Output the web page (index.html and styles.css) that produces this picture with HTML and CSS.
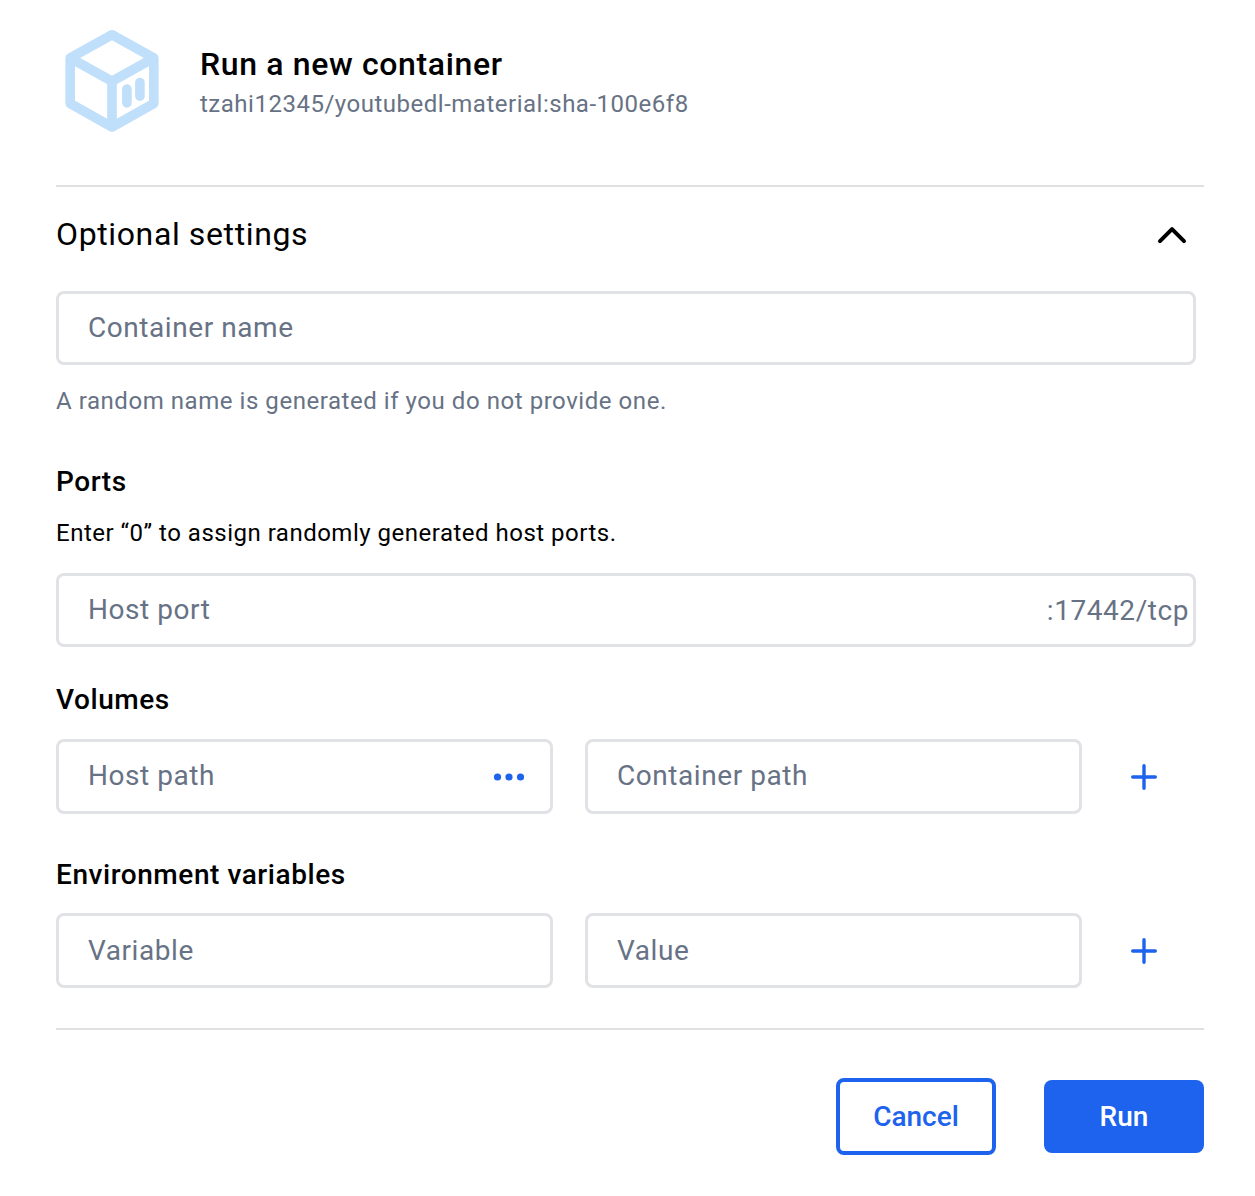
FILE: index.html
```html
<!DOCTYPE html>
<html lang="en">
<head>
<meta charset="utf-8">
<title>Run a new container</title>
<link rel="stylesheet" href="styles.css">
</head>
<body>
<main class="dialog">
  <header class="header">
    <svg class="logo" width="94" height="102" viewBox="0 0 94 102" fill="none" stroke="#bfdffa" stroke-width="9.600" stroke-linejoin="round">
      <path d="M47 4.800L88.800 28V73.500L47 97L5.200 73.500V28Z"/>
      <path d="M5.200 28L47 51.200L88.800 28M47 51.200V97"/>
      <path d="M61.900 59.100V72.900M74.900 52.500V66.200" stroke-linecap="round"/>
    </svg>
    <div class="heading">
      <h1 class="title">Run a new container</h1>
      <p class="image-name">tzahi12345/youtubedl-material:sha-100e6f8</p>
    </div>
  </header>
  <section class="settings">
    <div class="settings-bar">
      <h2 class="settings-title">Optional settings</h2>
      <svg class="chevron" width="32" height="20" viewBox="0 0 32 20" fill="none" stroke="#000" stroke-width="4" stroke-linecap="round" stroke-linejoin="round"><path d="M4 16.200L16 4.200L28 16.200"/></svg>
    </div>
    <div class="field wide"><span class="placeholder">Container name</span></div>
    <p class="hint">A random name is generated if you do not provide one.</p>
    <h3 class="label ports">Ports</h3>
    <p class="note">Enter “0” to assign randomly generated host ports.</p>
    <div class="field wide port"><span class="placeholder">Host port</span><span class="suffix">:17442/tcp</span></div>
    <h3 class="label volumes">Volumes</h3>
    <div class="row">
      <div class="field"><span class="placeholder">Host path</span><svg class="dots" width="32" height="8" viewBox="0 0 32 8" fill="#1d63ed"><circle cx="4.500" cy="4" r="3.600"/><circle cx="16" cy="4" r="3.600"/><circle cx="27.500" cy="4" r="3.600"/></svg></div>
      <div class="field"><span class="placeholder">Container path</span></div>
      <svg class="plus" width="28" height="28" viewBox="0 0 28 28" stroke="#1d63ed" stroke-width="3.400" stroke-linecap="round"><path d="M14 2.700V25.300M2.700 14H25.300"/></svg>
    </div>
    <h3 class="label env">Environment variables</h3>
    <div class="row env-row">
      <div class="field"><span class="placeholder">Variable</span></div>
      <div class="field"><span class="placeholder">Value</span></div>
      <svg class="plus" width="28" height="28" viewBox="0 0 28 28" stroke="#1d63ed" stroke-width="3.400" stroke-linecap="round"><path d="M14 2.700V25.300M2.700 14H25.300"/></svg>
    </div>
  </section>
  <footer class="actions">
    <button class="button cancel">Cancel</button>
    <button class="button run">Run</button>
  </footer>
</main>
</body>
</html>
```
FILE: styles.css
```css
* { box-sizing: border-box; }
body { margin: 0; background: #fff; color: #000; font-family: Roboto, sans-serif; }
h1, h2, h3, p { margin: 0; white-space: nowrap; }
.dialog { width: 1255px; height: 1196px; padding: 0 51px 0 56px; }
.header { display: flex; height: 187px; padding: 30px 0 0 9px; border-bottom: 2px solid #e0e0e0; }
.logo { flex: none; overflow: visible; }
.heading { margin: 14px 0 0 41px; }
.title { font-size: 32px; line-height: 40px; font-weight: 500; letter-spacing: 0.64px; }
.image-name { color: #677285; font-size: 24px; line-height: 40px; letter-spacing: 0.51px; }
.settings { height: 843px; border-bottom: 2px solid #e0e0e0; }
.settings-bar { display: flex; justify-content: space-between; align-items: center; height: 96px; padding-right: 16px; }
.settings-title { padding-bottom: 2px; font-size: 32px; line-height: 40px; font-weight: 400; letter-spacing: 0.62px; }
.field { display: flex; align-items: center; justify-content: space-between; width: 497px; height: 75px; padding: 0 25px 2px 29px; border: 3px solid #e1e2e6; border-radius: 8px; color: #677285; font-size: 28px; letter-spacing: 0.56px; }
.wide { width: 1140px; height: 74px; margin-top: 8px; }
.hint { margin-top: 20px; color: #677285; font-size: 24px; line-height: 32px; letter-spacing: 0.55px; }
.label { font-size: 28px; line-height: 36px; font-weight: 500; letter-spacing: 0.56px; }
.ports { margin-top: 47px; }
.note { margin-top: 17px; font-size: 24px; line-height: 32px; letter-spacing: 0.5px; }
.port { margin-top: 24px; padding-right: 4px; }
.suffix { padding-top: 2px; }
.volumes { margin-top: 35px; }
.row { display: flex; align-items: center; gap: 32px; margin-top: 21px; }
.dots { margin-top: 2px; }
.plus { margin-left: 16px; }
.env { margin-top: 43px; }
.env-row { margin-top: 20px; }
.env-row .field { padding-bottom: 0; }
.actions { display: flex; justify-content: flex-end; align-items: center; gap: 48px; padding-top: 48px; }
.button { width: 160px; height: 73px; border: 0; border-radius: 8px; font: 500 28px Roboto, sans-serif; letter-spacing: 0; }
.cancel { height: 77px; border: 4px solid #1d63ed; background: #fff; color: #1d63ed; }
.run { background: #1d63ed; color: #fff; }
```
